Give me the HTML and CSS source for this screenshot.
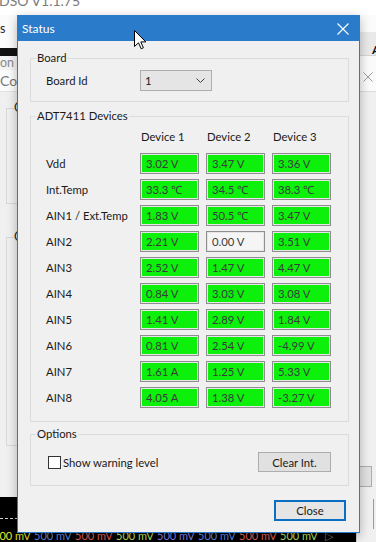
FILE: index.html
```html
<!DOCTYPE html>
<html>
<head>
<meta charset="utf-8">
<title>Status</title>
<link rel="stylesheet" href="styles.css">
</head>
<body>
<div class="desktop">
  <div class="main-win">
    <div class="main-top"><span class="main-title">DSO V1.1.75</span></div>
    <div class="main-menu">s</div>
    <div class="main-tab"></div>
    <div class="main-on">on</div>
    <div class="main-con">Con</div>
    <div class="main-panel">
      <div class="left-group lg1"><span class="lg-label">C</span></div>
      <div class="left-group lg2"><span class="lg-label">C</span></div>
    </div>
  </div>

  <div class="scope">
    <div class="scope-dash"></div>
    <div class="scope-labels">
      <span class="sl y">500 mV</span><span class="sl b">500 mV</span><span class="sl r">500 mV</span><span class="sl g">500 mV</span><span class="sl b2">500 mV</span><span class="sl b">500 mV</span><span class="sl r">500 mV</span><span class="sl g">500 mV</span><span class="sl tri">&#9655;</span>
    </div>
  </div>

  <div class="side-win">
    <div class="side-head"><span class="side-a">A</span></div>
    <div class="side-row">
      <svg class="side-x" width="10" height="10" viewBox="0 0 10 10"><path d="M0.5 0.5 L9.5 9.5 M9.5 0.5 L0.5 9.5" stroke="#9a9a9a" stroke-width="1" fill="none"/></svg>
    </div>
    <div class="side-btn"></div>
    <div class="side-btn2"></div>
  </div>

  <div class="dialog">
    <div class="titlebar">
      <span class="title">Status</span>
      <svg class="title-close" width="12" height="12" viewBox="0 0 12 12"><path d="M0.5 0.5 L11.5 11.5 M11.5 0.5 L0.5 11.5" stroke="#ffffff" stroke-width="1.1" fill="none"/></svg>
    </div>
    <div class="dialog-body">
      <fieldset class="group group-board">
        <legend>Board</legend>
        <div class="group-inner board-row">
          <span class="board-label">Board Id</span>
          <div class="combo">
            <span class="combo-value">1</span>
            <svg class="chev" width="9" height="5" viewBox="0 0 9 5"><path d="M0.5 0.5 L4.5 4.5 L8.5 0.5" stroke="#404040" stroke-width="1" fill="none"/></svg>
          </div>
        </div>
      </fieldset>

      <fieldset class="group group-devices">
        <legend>ADT7411 Devices</legend>
        <div class="group-inner dev-grid">
          <span></span><span class="hdr">Device 1</span><span class="hdr">Device 2</span><span class="hdr">Device 3</span>

          <span class="rl">Vdd</span><span class="cell ok">3.02 V</span><span class="cell ok">3.47 V</span><span class="cell ok">3.36 V</span>
          <span class="rl">Int.Temp</span><span class="cell ok">33.3 &#8451;</span><span class="cell ok">34.5 &#8451;</span><span class="cell ok">38.3 &#8451;</span>
          <span class="rl">AIN1 / Ext.Temp</span><span class="cell ok">1.83 V</span><span class="cell ok">50.5 &#8451;</span><span class="cell ok">3.47 V</span>
          <span class="rl">AIN2</span><span class="cell ok">2.21 V</span><span class="cell off">0.00 V</span><span class="cell ok">3.51 V</span>
          <span class="rl">AIN3</span><span class="cell ok">2.52 V</span><span class="cell ok">1.47 V</span><span class="cell ok">4.47 V</span>
          <span class="rl">AIN4</span><span class="cell ok">0.84 V</span><span class="cell ok">3.03 V</span><span class="cell ok">3.08 V</span>
          <span class="rl">AIN5</span><span class="cell ok">1.41 V</span><span class="cell ok">2.89 V</span><span class="cell ok">1.84 V</span>
          <span class="rl">AIN6</span><span class="cell ok">0.81 V</span><span class="cell ok">2.54 V</span><span class="cell ok">-4.99 V</span>
          <span class="rl">AIN7</span><span class="cell ok">1.61 A</span><span class="cell ok">1.25 V</span><span class="cell ok">5.33 V</span>
          <span class="rl">AIN8</span><span class="cell ok">4.05 A</span><span class="cell ok">1.38 V</span><span class="cell ok">-3.27 V</span>
        </div>
      </fieldset>

      <fieldset class="group group-options">
        <legend>Options</legend>
        <div class="group-inner opt-row">
          <label class="check"><span class="box"></span><span class="check-text">Show warning level</span></label>
          <button class="btn btn-clear" type="button">Clear Int.</button>
        </div>
      </fieldset>

      <div class="footer">
        <button class="btn btn-default" type="button">Close</button>
      </div>
    </div>
  </div>

  <svg class="cursor" width="13" height="20" viewBox="0 0 13 20"><path d="M0.5 0.5 L0.5 16.5 L4.5 12.8 L7.2 18.8 L9.4 17.8 L6.8 11.9 L11.8 11.9 Z" fill="#ffffff" stroke="#000000" stroke-width="1" stroke-linejoin="miter"/></svg>
</div>
</body>
</html>
```

FILE: styles.css
```css
* { box-sizing: border-box; }

html, body {
  margin: 0;
  padding: 0;
}

body {
  width: 376px;
  height: 542px;
  overflow: hidden;
  background: #f0f0f0;
  font-family: Lato, "Noto Sans", sans-serif;
  font-size: 11.3px;
  color: #1a1a1a;
}

.desktop {
  position: relative;
  width: 376px;
  height: 542px;
  overflow: hidden;
}

/* ---------- background main window ---------- */
.main-win {
  position: absolute;
  left: 0;
  top: 0;
  width: 376px;
  height: 497px;
  background: #f7f7f7;
}

.main-top {
  height: 15px;
  background: #ffffff;
  overflow: hidden;
  position: relative;
}

.main-title {
  position: absolute;
  left: -1px;
  top: -7px;
  color: #7a7a7a;
  font-size: 14px;
  line-height: 16px;
  white-space: nowrap;
}

.main-menu {
  height: 33px;
  padding: 6px 0 0 0;
  line-height: 16px;
  font-size: 12.5px;
  color: #222;
  background: #fbfbfb;
}

.main-tab {
  width: 30px;
  height: 8px;
  background: #111;
}

.main-on {
  height: 14px;
  line-height: 14px;
  font-size: 12.5px;
  color: #8a8a8a;
  background: #f4f4f4;
}

.main-con {
  height: 22px;
  line-height: 22px;
  color: #777;
  font-size: 14px;
  background: #fbfbfb;
  border-bottom: 1px solid #e2e2e2;
}

.main-panel {
  position: relative;
  height: 405px;
  background: #f0f0f0;
}

.left-group {
  position: absolute;
  left: 6px;
  width: 40px;
  border: 1px solid #d8d8d8;
}

.lg1 { top: 16px; height: 96px; }
.lg2 { top: 145px; height: 209px; }

.lg-label {
  position: absolute;
  left: 7px;
  top: -9px;
  line-height: 16px;
  font-size: 12.5px;
  color: #222;
  background: #f0f0f0;
}

/* ---------- scope strip ---------- */
.scope {
  position: absolute;
  left: 0;
  top: 497px;
  width: 357px;
  height: 45px;
  background: #000;
}

.scope-dash {
  margin-top: 21px;
  height: 1px;
  border-top: 1px dashed #d0d0d0;
}

.scope-labels {
  display: flex;
  margin-top: 11px;
  margin-left: -7px;
  line-height: 12px;
  font-size: 11px;
  white-space: nowrap;
}

.sl { width: 41px; flex: none; }
.sl.y { color: #e8e830; }
.sl.b { color: #5b8cf0; }
.sl.r { color: #e8605a; }
.sl.g { color: #b8e860; }
.sl.b2 { color: #7f86f0; }
.sl.tri { color: #777; width: 20px; margin-left: 4px; }

/* ---------- side window (right) ---------- */
.side-win {
  position: absolute;
  left: 356px;
  top: 32px;
  width: 30px;
  height: 510px;
  background: #f0f0f0;
  border-left: 1px solid #d0d0d0;
}

.side-head {
  height: 24px;
  background: #e9e9e9;
  border-bottom: 1px solid #d4d4d4;
  padding: 11px 0 0 15px;
}

.side-a {
  font-weight: bold;
  font-size: 12px;
  line-height: 12px;
  color: #111;
}

.side-row {
  height: 36px;
  background: #fafafa;
  border-bottom: 1px solid #dcdcdc;
  padding: 16px 0 0 6px;
}

.side-x { display: block; }

.side-btn {
  margin-top: 374px;
  width: 15px;
  height: 21px;
  background: #e1e1e1;
  border: 1px solid #adadad;
}

.side-btn2 {
  margin-top: 12px;
  margin-left: 16px;
  width: 10px;
  height: 30px;
  border-left: 1px solid #9a9a9a;
}

/* ---------- dialog ---------- */
.dialog {
  position: absolute;
  left: 17px;
  top: 15px;
  width: 343px;
  height: 518px;
  background: #f0f0f0;
  border: 1px solid #2b7bcb;
  box-shadow: 0 3px 10px rgba(0, 0, 0, 0.28);
  z-index: 2;
}

.titlebar {
  height: 25px;
  background: #2b7bcb;
  display: flex;
  align-items: center;
  justify-content: space-between;
  padding: 0 10px 0 4px;
}

.title {
  color: #fff;
  font-size: 12px;
  line-height: 16px;
}

.title-close { display: block; }

.dialog-body {
  padding: 9px 10px 0 12px;
}

.group {
  margin: 0;
  padding: 0;
  border: 1px solid #dcdcdc;
  min-inline-size: 0;
}

.group legend {
  margin-left: 5px;
  padding: 0 1px;
  line-height: 16px;
  color: #1a1a1a;
}

.board-row {
  display: flex;
  align-items: center;
  height: 21px;
  margin: 4px 0 10px 15px;
}

.board-label {
  width: 94px;
}

.combo {
  width: 72px;
  height: 21px;
  background: #e5e5e5;
  border: 1px solid #adadad;
  display: flex;
  align-items: center;
  justify-content: space-between;
  padding: 0 6px 0 4px;
}

.chev { display: block; }

.group-devices {
  margin-top: 6px;
}

.dev-grid {
  display: grid;
  grid-template-columns: 87px 59px 59px 59px;
  grid-template-rows: 19px repeat(10, 21px);
  column-gap: 7px;
  row-gap: 5px;
  margin: 5px 0 13px 15px;
}

.hdr {
  line-height: 16px;
  padding-left: 1px;
  color: #1a1a1a;
}

.rl {
  line-height: 21px;
  white-space: nowrap;
  color: #1a1a1a;
}

.cell {
  border: 1px solid #8e8e8e;
  box-shadow: inset 0 0 0 1px #e6e6e6;
  padding-left: 5px;
  line-height: 19px;
  color: #3a3a3a;
  white-space: nowrap;
}

.cell.ok { background: #0cf00c; }
.cell.off { background: #f5f5f5; }

.group-options {
  margin-top: 4px;
}

.opt-row {
  display: flex;
  align-items: center;
  justify-content: space-between;
  height: 20px;
  margin: 10px 17px 13px 17px;
}

.check {
  display: flex;
  align-items: center;
  gap: 2px;
}

.box {
  width: 13px;
  height: 13px;
  background: #fff;
  border: 1px solid #333;
}

.btn {
  font-family: inherit;
  font-size: 11.3px;
  color: #1a1a1a;
  background: #e1e1e1;
  border: 1px solid #adadad;
  padding: 0;
  margin: 0;
}

.btn-clear {
  width: 73px;
  height: 20px;
}

.footer {
  margin-top: 14px;
  display: flex;
  justify-content: flex-end;
  padding-right: 3px;
}

.btn-default {
  width: 72px;
  height: 21px;
  border: 2px solid #0a6fc2;
  background: #e5e5e5;
}

/* ---------- cursor ---------- */
.cursor {
  position: absolute;
  left: 134px;
  top: 30px;
  z-index: 5;
}
```
